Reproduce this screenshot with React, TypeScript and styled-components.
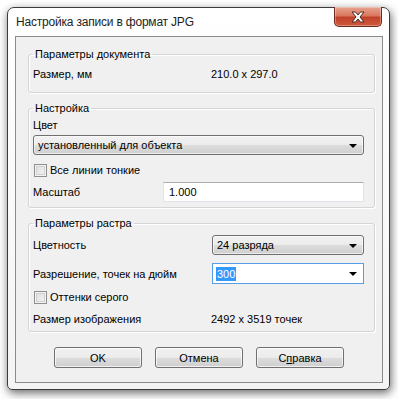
import styled, { createGlobalStyle } from "styled-components";

const Global = createGlobalStyle`
  html, body {
    margin: 0;
    background: #ffffff;
  }
  body {
    font-family: "Liberation Sans", Arial, sans-serif;
    font-size: 11px;
    color: #000;
  }
`;

const Page = styled.div`
  width: 398px;
  height: 399px;
  padding: 7px 0 0 7px;
  box-sizing: border-box;
  overflow: hidden;
`;

const Window = styled.div`
  width: 383px;
  height: 383px;
  box-sizing: border-box;
  border: 1px solid #3c3c3c;
  border-radius: 7px 7px 5px 5px;
  background: linear-gradient(#ffffff, #f4f4f4);
  box-shadow: 1px 3px 10px rgba(0, 0, 0, 0.6);
  padding: 0 6px 6px 7px;
  display: flex;
  flex-direction: column;
`;

const TitleBar = styled.div`
  height: 28px;
  display: flex;
  align-items: flex-start;
  justify-content: space-between;
`;

const Title = styled.div`
  font-family: "Liberation Sans", Arial, sans-serif;
  font-size: 12px;
  letter-spacing: -0.2px;
  margin-top: 7px;
  margin-left: 1px;
  color: #1e1e1e;
`;

const CloseButton = styled.div`
  width: 46px;
  height: 19px;
  margin-top: -1px;
  margin-right: 1px;
  border: 1px solid #6d2b20;
  border-top: none;
  border-radius: 0 0 5px 5px;
  background: linear-gradient(#e8a593 0%, #d9785e 45%, #c0432a 55%, #cf5a3c 100%);
  box-shadow: inset 0 0 0 1px rgba(255, 255, 255, 0.3);
  display: flex;
  align-items: center;
  justify-content: center;
`;

const Client = styled.div`
  flex: 1;
  border: 1px solid #8b8b8b;
  background: #f0f0f0;
  padding: 10px 7px 0 12px;
  display: flex;
  flex-direction: column;
  gap: 8px;
`;

const Group = styled.fieldset<{ $pt: number; $pb: number }>`
  margin: 0;
  padding: ${(p) => p.$pt}px 10px ${(p) => p.$pb}px 4px;
  border: 1px solid #d5d5d5;
  border-radius: 3px;
  box-shadow: inset 1px 1px 0 #ffffff, 1px 1px 0 #ffffff;
  display: flex;
  flex-direction: column;
  min-width: 0;
`;

const Legend = styled.legend`
  padding: 0 2px;
  margin-left: 0;
  line-height: 14px;
  color: #000;
`;

const Row = styled.div<{ $label: number; $mt?: number }>`
  display: grid;
  grid-template-columns: ${(p) => p.$label}px 1fr;
  align-items: center;
  margin-top: ${(p) => p.$mt ?? 0}px;
  line-height: 14px;
`;

const Label = styled.div<{ $mt?: number }>`
  line-height: 14px;
  margin-top: ${(p) => p.$mt ?? 0}px;
`;

const Select = styled.div<{ $mt?: number }>`
  height: 20px;
  box-sizing: border-box;
  margin-top: ${(p) => p.$mt ?? 0}px;
  border: 1px solid #707070;
  border-radius: 3px;
  background: linear-gradient(#f2f2f2 0%, #ebebeb 50%, #dddddd 50%, #cfcfcf 100%);
  box-shadow: inset 0 0 0 1px rgba(255, 255, 255, 0.6);
  display: flex;
  align-items: center;
  justify-content: space-between;
  padding: 0 6px 0 4px;
`;

const Combo = styled.div`
  height: 21px;
  box-sizing: border-box;
  border: 1px solid #569de5;
  background: #ffffff;
  display: flex;
  align-items: center;
  justify-content: space-between;
  padding: 0 6px 0 3px;
`;

const Selected = styled.span`
  background: #3399ff;
  color: #ffffff;
  padding: 0 1px;
`;

const TextInput = styled.div`
  height: 20px;
  box-sizing: border-box;
  border: 1px solid #e2e3ea;
  border-top-color: #abadb3;
  background: #ffffff;
  display: flex;
  align-items: center;
  padding: 0 5px;
`;

const Arrow = styled.span`
  width: 0;
  height: 0;
  border-left: 4px solid transparent;
  border-right: 4px solid transparent;
  border-top: 4px solid #000;
  margin-top: 1px;
`;

const Check = styled.label<{ $mt?: number }>`
  display: flex;
  align-items: center;
  gap: 3px;
  margin-top: ${(p) => p.$mt ?? 0}px;
  line-height: 14px;
`;

const Box = styled.span`
  width: 13px;
  height: 13px;
  box-sizing: border-box;
  border: 1px solid #8e8f8f;
  background: linear-gradient(135deg, #dcdcdc, #f6f6f6);
  box-shadow: inset 0 0 0 1px #f4f4f4, inset 0 0 0 2px #d0d0d0;
  margin-left: 1px;
`;

const Buttons = styled.div`
  display: flex;
  justify-content: center;
  gap: 13px;
  margin-top: 7px;
  padding-right: 5px;
`;

const Button = styled.div`
  width: 88px;
  height: 21px;
  box-sizing: border-box;
  border: 1px solid #707070;
  border-radius: 3px;
  background: linear-gradient(#f2f2f2 0%, #ebebeb 50%, #dddddd 50%, #cfcfcf 100%);
  box-shadow: inset 0 0 0 1px rgba(255, 255, 255, 0.7);
  display: flex;
  align-items: center;
  justify-content: center;
`;

function CloseIcon() {
  return (
    <svg width="14" height="12" viewBox="0 0 14 12">
      <path
        d="M1 1 H4.5 L7 4 L9.5 1 H13 L9 6 L13 11 H9.5 L7 8 L4.5 11 H1 L5 6 Z"
        fill="#ffffff"
        stroke="#4a2a24"
        strokeWidth="1"
        strokeLinejoin="round"
      />
    </svg>
  );
}

export default function App() {
  return (
    <Page>
      <Global />
      <Window>
        <TitleBar>
          <Title>Настройка записи в формат JPG</Title>
          <CloseButton>
            <CloseIcon />
          </CloseButton>
        </TitleBar>
        <Client>
          <Group $pt={6} $pb={11}>
            <Legend>Параметры документа</Legend>
            <Row $label={178}>
              <span>Размер, мм</span>
              <span>210.0 x 297.0</span>
            </Row>
          </Group>

          <Group $pt={3} $pb={5}>
            <Legend>Настройка</Legend>
            <Label>Цвет</Label>
            <Select $mt={3}>
              <span>установленный для объекта</span>
              <Arrow />
            </Select>
            <Check $mt={8}>
              <Box />
              Все линии тонкие
            </Check>
            <Row $label={130} $mt={5}>
              <span>Масштаб</span>
              <TextInput>1.000</TextInput>
            </Row>
          </Group>

          <Group $pt={5} $pb={5}>
            <Legend>Параметры растра</Legend>
            <Row $label={179}>
              <span>Цветность</span>
              <Select>
                <span>24 разряда</span>
                <Arrow />
              </Select>
            </Row>
            <Row $label={179} $mt={8}>
              <span>Разрешение, точек на дюйм</span>
              <Combo>
                <Selected>300</Selected>
                <Arrow />
              </Combo>
            </Row>
            <Check $mt={6}>
              <Box />
              Оттенки серого
            </Check>
            <Row $label={178} $mt={8}>
              <span>Размер изображения</span>
              <span>2492 x 3519 точек</span>
            </Row>
          </Group>

          <Buttons>
            <Button>OK</Button>
            <Button>Отмена</Button>
            <Button>
              <span>
                С<u>п</u>равка
              </span>
            </Button>
          </Buttons>
        </Client>
      </Window>
    </Page>
  );
}
